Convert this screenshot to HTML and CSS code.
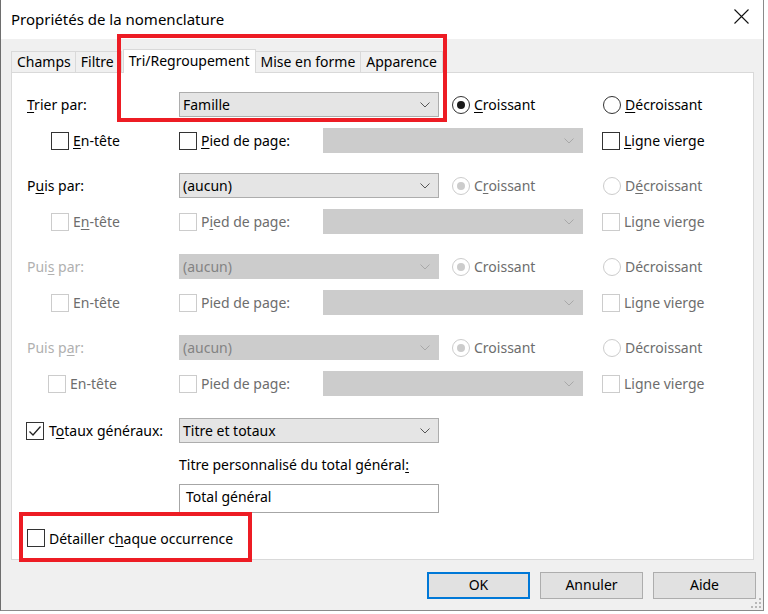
FILE: index.html
```html
<!DOCTYPE html>
<html lang="fr">
<head>
<meta charset="utf-8">
<title>Propriétés de la nomenclature</title>
<link rel="stylesheet" href="styles.css">
</head>
<body>
<div class="window">
  <div class="titlebar">
    <span class="title">Propriétés de la nomenclature</span>
    <svg class="close" width="15" height="15" viewBox="0 0 15 15"><path d="M0.5 0.5 L14.5 14.5 M14.5 0.5 L0.5 14.5" stroke="#111" stroke-width="1.1" fill="none"/></svg>
  </div>
  <div class="body">
    <div class="tabs">
      <div class="tab tab-champs">Champs</div>
      <div class="tab tab-filtre">Filtre</div>
      <div class="tab tab-active">Tri/Regroupement</div>
      <div class="tab">Mise en forme</div>
      <div class="tab">Apparence</div>
    </div>
    <div class="panel">
      <!-- group 1 -->
      <div class="row-a">
        <span class="lbl"><u>T</u>rier par:</span>
        <div class="select"><span>Famille</span><svg class="chev" width="10" height="6" viewBox="0 0 10 6"><path d="M0.5 0.5 L5 5 L9.5 0.5" fill="none" stroke="#555" stroke-width="1"/></svg></div>
        <label class="radio r1"><span class="circle on"></span><span><u>C</u>roissant</span></label>
        <label class="radio"><span class="circle"></span><span><u>D</u>écroissant</span></label>
      </div>
      <div class="row-b">
        <label class="cb c1"><span class="box"></span><span><u>E</u>n-tête</span></label>
        <label class="cb c2"><span class="box"></span><span><u>P</u>ied de page:</span></label>
        <div class="select dis"><span></span><svg class="chev" width="10" height="6" viewBox="0 0 10 6"><path d="M0.5 0.5 L5 5 L9.5 0.5" fill="none" stroke="#a8a8a8" stroke-width="1"/></svg></div>
        <label class="cb c3"><span class="box"></span><span><u>L</u>igne vierge</span></label>
      </div>
      <!-- group 2 -->
      <div class="row-a gap">
        <span class="lbl">P<u>u</u>is par:</span>
        <div class="select"><span>(aucun)</span><svg class="chev" width="10" height="6" viewBox="0 0 10 6"><path d="M0.5 0.5 L5 5 L9.5 0.5" fill="none" stroke="#555" stroke-width="1"/></svg></div>
        <label class="radio r1 dis"><span class="circle on"></span><span>C<u>r</u>oissant</span></label>
        <label class="radio dis"><span class="circle"></span><span>D<u>é</u>croissant</span></label>
      </div>
      <div class="row-b">
        <label class="cb c1 dis"><span class="box"></span><span>E<u>n</u>-tête</span></label>
        <label class="cb c2 dis"><span class="box"></span><span>P<u>i</u>ed de page:</span></label>
        <div class="select dis"><span></span><svg class="chev" width="10" height="6" viewBox="0 0 10 6"><path d="M0.5 0.5 L5 5 L9.5 0.5" fill="none" stroke="#a8a8a8" stroke-width="1"/></svg></div>
        <label class="cb c3 dis"><span class="box"></span><span>Li<u>g</u>ne vierge</span></label>
      </div>
      <!-- group 3 -->
      <div class="row-a gap">
        <span class="lbl dis">Pui<u>s</u> par:</span>
        <div class="select dis"><span>(aucun)</span><svg class="chev" width="10" height="6" viewBox="0 0 10 6"><path d="M0.5 0.5 L5 5 L9.5 0.5" fill="none" stroke="#a8a8a8" stroke-width="1"/></svg></div>
        <label class="radio r1 dis"><span class="circle on"></span><span>Croissant</span></label>
        <label class="radio dis"><span class="circle"></span><span>Décroissant</span></label>
      </div>
      <div class="row-b">
        <label class="cb c1 dis"><span class="box"></span><span>En-tête</span></label>
        <label class="cb c2 dis"><span class="box"></span><span>Pied de page:</span></label>
        <div class="select dis"><span></span><svg class="chev" width="10" height="6" viewBox="0 0 10 6"><path d="M0.5 0.5 L5 5 L9.5 0.5" fill="none" stroke="#a8a8a8" stroke-width="1"/></svg></div>
        <label class="cb c3 dis"><span class="box"></span><span>Ligne vierge</span></label>
      </div>
      <!-- group 4 -->
      <div class="row-a gap">
        <span class="lbl dis">Puis p<u>a</u>r:</span>
        <div class="select dis"><span>(aucun)</span><svg class="chev" width="10" height="6" viewBox="0 0 10 6"><path d="M0.5 0.5 L5 5 L9.5 0.5" fill="none" stroke="#a8a8a8" stroke-width="1"/></svg></div>
        <label class="radio r1 dis"><span class="circle on"></span><span>Croissant</span></label>
        <label class="radio dis"><span class="circle"></span><span>Décroissant</span></label>
      </div>
      <div class="row-b shift">
        <label class="cb c1 dis"><span class="box"></span><span>En-tête</span></label>
        <label class="cb c2 dis"><span class="box"></span><span>Pied de page:</span></label>
        <div class="select dis"><span></span><svg class="chev" width="10" height="6" viewBox="0 0 10 6"><path d="M0.5 0.5 L5 5 L9.5 0.5" fill="none" stroke="#a8a8a8" stroke-width="1"/></svg></div>
        <label class="cb c3 dis"><span class="box"></span><span>Ligne vierge</span></label>
      </div>
      <!-- totals -->
      <div class="row-tot">
        <label class="cb ctot"><span class="box"><svg width="14" height="12" viewBox="0 0 14 12"><path d="M1.5 6.5 L5 10 L12.5 1.5" fill="none" stroke="#222" stroke-width="1.3"/></svg></span><span>T<u>o</u>taux généraux:</span></label>
        <div class="select"><span>Titre et totaux</span><svg class="chev" width="10" height="6" viewBox="0 0 10 6"><path d="M0.5 0.5 L5 5 L9.5 0.5" fill="none" stroke="#555" stroke-width="1"/></svg></div>
      </div>
      <div class="row-title">Titre personnalisé du total général<u>:</u></div>
      <div class="row-input"><div class="input">Total général</div></div>
      <div class="row-detail">
        <label class="cb"><span class="box"></span><span>Détailler c<u>h</u>aque occurrence</span></label>
      </div>
    </div>
    <div class="buttons">
      <div class="btn btn-default">OK</div>
      <div class="btn">Annuler</div>
      <div class="btn">Aide</div>
    </div>
  </div>
  <div class="mark mark-tab"></div>
  <div class="mark mark-detail"></div>
  <svg class="grip" width="10" height="10" viewBox="0 0 10 10">
    <g fill="#b8b8b8">
      <rect x="8" y="0" width="2" height="2"/>
      <rect x="4" y="4" width="2" height="2"/><rect x="8" y="4" width="2" height="2"/>
      <rect x="0" y="8" width="2" height="2"/><rect x="4" y="8" width="2" height="2"/><rect x="8" y="8" width="2" height="2"/>
    </g>
  </svg>
</div>
</body>
</html>
```
FILE: styles.css
```css
* { box-sizing: border-box; }
html, body { margin: 0; padding: 0; background: #ffffff; }
body {
  font-family: "Noto Sans", "Open Sans", "Liberation Sans", sans-serif;
  font-size: 14px;
  color: #000;
}
u { text-decoration: underline; text-underline-offset: 2px; text-decoration-thickness: 1px; }

.window {
  position: relative;
  width: 764px;
  height: 611px;
  border-left: 1px solid #6e6e6e;
  border-right: 1px solid #8a8a8a;
  border-bottom: 1px solid #8a8a8a;
  background: #f0f0f0;
  display: flex;
  flex-direction: column;
}

.titlebar {
  height: 39px;
  background: #ffffff;
  display: flex;
  align-items: center;
  justify-content: space-between;
  padding: 0 14px 2px 10px;
  flex: none;
}
.title { font-size: 15px; color: #000; }
.close { margin-top: -4px; }

.body { flex: 1; display: flex; flex-direction: column; }

.tabs {
  display: flex;
  align-items: flex-end;
  padding-left: 10px;
  margin-top: 10px;
  height: 23px;
  position: relative;
  z-index: 2;
}
.tab {
  height: 21px;
  border: 1px solid #d9d9d9;
  border-bottom: none;
  border-left: none;
  background: #f0f0f0;
  padding: 0 5px;
  line-height: 20px;
  font-size: 14px;
  color: #000;
  white-space: nowrap;
}
.tab-champs { border-left: 1px solid #d9d9d9; padding: 0 4px 0 5px; }
.tab-filtre { width: 46px; }
.tab-active {
  height: 24px;
  margin-bottom: -1px;
  background: #ffffff;
  border-left: 1px solid #d9d9d9;
  padding: 0 5px;
  line-height: 22px;
  margin-left: 1px;
}

.panel {
  margin-left: 10px;
  width: 743px;
  height: 488px;
  background: #ffffff;
  border: 1px solid #d9d9d9;
  padding: 19px 0 0 15px;
  display: flex;
  flex-direction: column;
}

.row-a, .row-b, .row-tot {
  height: 25px;
  display: flex;
  align-items: center;
  flex: none;
}
.row-b { margin-top: 11px; padding-left: 24px; }
.row-b.shift { padding-left: 21px; }
.row-a.gap { margin-top: 20px; }

.lbl { width: 152px; flex: none; }
.lbl.dis { color: #b0b0b0; }

.select {
  width: 260px;
  height: 25px;
  flex: none;
  background: #e5e5e5;
  border: 1px solid #adadad;
  display: flex;
  align-items: center;
  justify-content: space-between;
  padding: 0 8px 0 3px;
  color: #000;
}
.select.dis { background: #cccccc; border-color: #cccccc; color: #838383; }
.chev { flex: none; }

.radio { display: flex; align-items: center; gap: 4px; flex: none; }
.radio.r1 { margin-left: 13px; width: 151px; }
.circle {
  width: 18px; height: 18px;
  border: 1px solid #333;
  border-radius: 50%;
  background: #fff;
  display: flex; align-items: center; justify-content: center;
  flex: none;
}
.circle.on::after {
  content: "";
  width: 8px; height: 8px;
  border-radius: 50%;
  background: #1a1a1a;
}
.radio.dis { color: #6d6d6d; }
.radio.dis .circle { border-color: #cccccc; }
.radio.dis .circle.on::after { background: #cccccc; }

.cb { display: flex; align-items: center; gap: 4px; flex: none; }
.box {
  width: 18px; height: 18px;
  border: 1px solid #333;
  background: #fff;
  flex: none;
  display: flex; align-items: center; justify-content: center;
}
.cb.dis { color: #6d6d6d; }
.cb.dis .box { border-color: #cccccc; }
.c1 { width: 128px; }
.row-b.shift .c1 { width: 131px; }
.c2 { width: 144px; }
.c3 { margin-left: 19px; }

.row-tot { margin-top: 22px; }
.ctot { width: 153px; margin-left: -1px; gap: 5px; }

.row-title { margin-top: 12px; padding-left: 152px; height: 20px; line-height: 20px; }
.row-input { margin-top: 9px; padding-left: 152px; }
.input {
  width: 260px; height: 29px;
  border: 1px solid #a6a6a6;
  background: #fff;
  padding: 0 6px;
  line-height: 24px;
}
.row-detail { margin-top: 15px; height: 20px; display: flex; align-items: center; }

.buttons {
  display: flex;
  justify-content: flex-end;
  gap: 10px;
  padding-right: 7px;
  margin-top: 12px;
}
.btn {
  width: 103px; height: 27px;
  background: #e1e1e1;
  border: 1px solid #adadad;
  text-align: center;
  line-height: 24px;
  font-size: 14px;
}
.btn-default { border: 2px solid #0078d7; line-height: 22px; }

.mark {
  position: absolute;
  border: 4px solid #ed1c24;
  pointer-events: none;
  z-index: 5;
}
.mark-tab { left: 116px; top: 34px; width: 330px; height: 88px; }
.mark-detail { left: 18px; top: 512px; width: 233px; height: 50px; }

.grip { position: absolute; right: 2px; bottom: 2px; }
```
